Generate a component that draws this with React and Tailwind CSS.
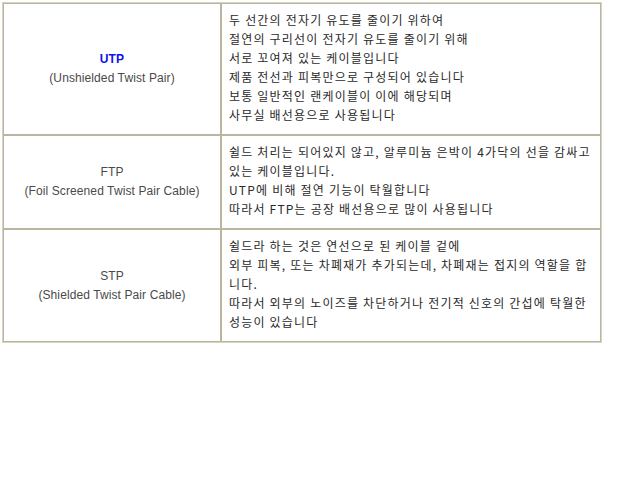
const rows = [
  {
    name: 'UTP',
    full: '(Unshielded Twist Pair)',
    bold: true,
    lines: [
      '두 선간의 전자기 유도를 줄이기 위하여',
      '절연의 구리선이 전자기 유도를 줄이기 위해',
      '서로 꼬여져 있는 케이블입니다',
      '제품 전선과 피복만으로 구성되어 있습니다',
      '보통 일반적인 랜케이블이 이에 해당되며',
      '사무실 배선용으로 사용됩니다',
    ],
  },
  {
    name: 'FTP',
    full: '(Foil Screened Twist Pair Cable)',
    lines: [
      '쉴드 처리는 되어있지 않고, 알루미늄 은박이 4가닥의 선을 감싸고',
      '있는 케이블입니다.',
      'UTP에 비해 절연 기능이 탁월합니다',
      '따라서 FTP는 공장 배선용으로 많이 사용됩니다',
    ],
  },
  {
    name: 'STP',
    full: '(Shielded Twist Pair Cable)',
    lines: [
      '쉴드라 하는 것은 연선으로 된 케이블 겉에',
      '외부 피복, 또는 차폐재가 추가되는데, 차폐재는 접지의 역할을 합',
      '니다.',
      '따라서 외부의 노이즈를 차단하거나 전기적 신호의 간섭에 탁월한',
      '성능이 있습니다',
    ],
  },
];

export default function App() {
  return (
    <div className="w-[640px] h-[480px] bg-white p-[2px] font-['Liberation_Sans','Noto_Sans_CJK_KR',sans-serif] text-[12px] leading-[19px]">
      <div className="w-[600px] border border-[#d6d3c2]">
        {rows.map((r) => (
          <div key={r.name} className="grid grid-cols-[218px_380px]">
            <div className="border border-[#b9b59f] flex flex-col items-center justify-center text-center text-[#4a4a4a] tracking-[0.1px]">
              <div className={r.bold ? 'font-bold text-[#1010e8]' : ''}>{r.name}</div>
              <div>{r.full}</div>
            </div>
            <div className="border border-[#b9b59f] pt-[6px] pb-[10px] pl-[7px] text-[#2a2a2a] tracking-[1.2px] font-['Noto_Sans_CJK_KR','Liberation_Sans',sans-serif]">
              {r.lines.map((l, i) => (
                <div key={i} className="whitespace-nowrap">{l}</div>
              ))}
            </div>
          </div>
        ))}
      </div>
    </div>
  );
}
